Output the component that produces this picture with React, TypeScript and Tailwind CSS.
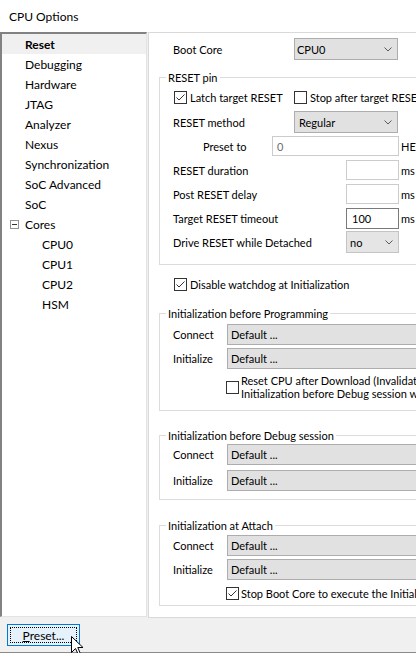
import React from "react";

const Chevron = () => (
  <svg width="8" height="5" viewBox="0 0 8 5" className="shrink-0">
    <path d="M0.5 0.5 L4 4 L7.5 0.5" fill="none" stroke="#5a5a5a" strokeWidth="1" />
  </svg>
);

const Check = ({ checked }: { checked?: boolean }) => (
  <div className="w-[13px] h-[13px] border border-[#333333] bg-white shrink-0 flex items-center justify-center">
    {checked && (
      <svg width="11" height="11" viewBox="0 0 11 11">
        <path d="M1.5 5.5 L4 8 L9.5 2.5" fill="none" stroke="#333333" strokeWidth="1" />
      </svg>
    )}
  </div>
);

const Group = ({
  title,
  className,
  children,
}: {
  title: string;
  className: string;
  children: React.ReactNode;
}) => (
  <fieldset className={"border border-[#dcdcdc] w-[290px] " + className}>
    <legend className="ml-[6px] px-[2px] leading-[15px]">{title}</legend>
    {children}
  </fieldset>
);

const WideSelect = () => (
  <div className="w-[230px] h-[21px] border border-[#adadad] bg-[#e1e1e1] flex items-center pl-[3px]">
    Default ...
  </div>
);

const treeItems = [
  "Debugging",
  "Hardware",
  "JTAG",
  "Analyzer",
  "Nexus",
  "Synchronization",
  "SoC Advanced",
  "SoC",
];

export default function App() {
  return (
    <div className="w-[416px] h-[653px] overflow-hidden relative bg-[#f0f0f0] text-black text-[12px] leading-[15px] font-['Lato',sans-serif]">
      {/* Title */}
      <div className="h-[32px] bg-white flex items-center pl-[9px]">CPU Options</div>

      {/* Body */}
      <div className="flex h-[586px]">
        {/* Tree */}
        <div className="w-[147px] h-[585px] shrink-0 bg-white border-l-2 border-t-2 border-l-[#828282] border-t-[#828282] border-r border-b border-r-[#e3e3e3] border-b-[#e3e3e3]">
          <div className="h-[20px] flex items-center pl-[23px] bg-[#f0f0f0] font-bold">Reset</div>
          {treeItems.map((t) => (
            <div key={t} className="h-[20px] flex items-center pl-[23px]">
              {t}
            </div>
          ))}
          <div className="h-[20px] flex items-center pl-[8px]">
            <div className="w-[9px] h-[9px] border border-[#919191] flex items-center justify-center shrink-0">
              <div className="w-[5px] h-[1px] bg-[#333333]" />
            </div>
            <span className="ml-[6px]">Cores</span>
          </div>
          {["CPU0", "CPU1", "CPU2", "HSM"].map((t) => (
            <div key={t} className="h-[20px] flex items-center pl-[40px]">
              {t}
            </div>
          ))}
        </div>

        {/* Right panel */}
        <div className="ml-[1px] w-[300px] shrink-0 h-[586px] bg-white border-l border-t border-b border-[#d9d9d9] pl-[10px] pt-[5px] flex flex-col whitespace-nowrap text-[11px]">
          {/* Boot core */}
          <div className="h-[22px] flex items-center pl-[14px]">
            <div className="w-[121px] shrink-0">Boot Core</div>
            <div className="w-[104px] h-[22px] border border-[#adadad] bg-[#e1e1e1] flex items-center justify-between pl-[2px] pr-[5px]">
              <span>CPU0</span>
              <Chevron />
            </div>
          </div>

          {/* RESET pin */}
          <Group title="RESET pin" className="mt-[10px] pb-[10px]">
            <div className="h-[24px] flex items-center pl-[14px]">
              <div className="w-[120px] shrink-0 flex items-center gap-[3px]">
                <Check checked />
                <span>Latch target RESET</span>
              </div>
              <div className="flex items-center gap-[3px]">
                <Check />
                <span>Stop after target RESET</span>
              </div>
            </div>
            <div className="mt-[1px] h-[24px] flex items-center pl-[13px]">
              <div className="w-[121px] shrink-0">RESET method</div>
              <div className="w-[104px] h-[22px] border border-[#adadad] bg-[#e1e1e1] flex items-center justify-between pl-[4px] pr-[5px]">
                <span>Regular</span>
                <Chevron />
              </div>
            </div>
            <div className="h-[24px] flex items-center pl-[13px]">
              <div className="w-[99px] shrink-0 pl-[30px]">Preset to</div>
              <div className="w-[127px] h-[20px] shrink-0 border border-[#cccccc] bg-white flex items-center pl-[4px] text-[#6d6d6d]">
                0
              </div>
              <span className="ml-[2px]">HEX</span>
            </div>
            <div className="h-[24px] flex items-center pl-[13px]">
              <div className="w-[173px] shrink-0">RESET duration</div>
              <div className="w-[53px] h-[20px] shrink-0 border border-[#cccccc] bg-white" />
              <span className="ml-[2px]">ms</span>
            </div>
            <div className="h-[24px] flex items-center pl-[13px]">
              <div className="w-[173px] shrink-0">Post RESET delay</div>
              <div className="w-[53px] h-[20px] shrink-0 border border-[#cccccc] bg-white" />
              <span className="ml-[2px]">ms</span>
            </div>
            <div className="h-[24px] flex items-center pl-[13px]">
              <div className="w-[173px] shrink-0">Target RESET timeout</div>
              <div className="w-[53px] h-[21px] shrink-0 border border-[#7a7a7a] bg-white flex items-center pl-[5px]">
                100
              </div>
              <span className="ml-[2px]">ms</span>
            </div>
            <div className="h-[24px] flex items-center pl-[13px]">
              <div className="w-[173px] shrink-0">Drive RESET while Detached</div>
              <div className="w-[53px] h-[22px] shrink-0 border border-[#c4c4c4] bg-[#e5e5e5] flex items-center justify-between pl-[3px] pr-[5px]">
                <span>no</span>
                <Chevron />
              </div>
            </div>
          </Group>

          {/* Watchdog */}
          <div className="mt-[7px] h-[24px] flex items-center pl-[15px] gap-[3px]">
            <Check checked />
            <span>Disable watchdog at Initialization</span>
          </div>

          {/* Init before programming */}
          <Group title="Initialization before Programming" className="mt-[10px] pb-[10px]">
            <div className="mt-[3px] flex items-center pl-[13px]">
              <div className="w-[54px] shrink-0">Connect</div>
              <WideSelect />
            </div>
            <div className="mt-[3px] flex items-center pl-[13px]">
              <div className="w-[54px] shrink-0">Initialize</div>
              <WideSelect />
            </div>
            <div className="mt-[5px] flex items-center pl-[66px] gap-[2px]">
              <Check />
              <div className="leading-[13px]">
                Reset CPU after Download (Invalidates
                <br />
                Initialization before Debug session when Attached)
              </div>
            </div>
          </Group>

          {/* Init before debug session */}
          <Group title="Initialization before Debug session" className="mt-[17px] pb-[8px]">
            <div className="mt-[1px] flex items-center pl-[13px]">
              <div className="w-[54px] shrink-0">Connect</div>
              <WideSelect />
            </div>
            <div className="mt-[5px] flex items-center pl-[13px]">
              <div className="w-[54px] shrink-0">Initialize</div>
              <WideSelect />
            </div>
          </Group>

          {/* Init at attach */}
          <Group title="Initialization at Attach" className="mt-[18px] pb-[4px]">
            <div className="mt-[2px] flex items-center pl-[13px]">
              <div className="w-[54px] shrink-0">Connect</div>
              <WideSelect />
            </div>
            <div className="mt-[3px] flex items-center pl-[13px]">
              <div className="w-[54px] shrink-0">Initialize</div>
              <WideSelect />
            </div>
            <div className="mt-[5px] h-[16px] flex items-center pl-[66px] gap-[2px]">
              <Check checked />
              <span>Stop Boot Core to execute the Initialization</span>
            </div>
          </Group>
        </div>
      </div>

      {/* Bottom bar */}
      <div className="h-[35px] border-b border-[#8a8a8a] pt-[6px] pl-[7px]">
        <div className="w-[73px] h-[22px] border border-[#0078d7] bg-[#e5f1fb] p-[2px] flex">
          <div className="flex-1 border border-dotted border-black flex items-center justify-center">
            <span>
              <span className="underline">P</span>reset...
            </span>
          </div>
        </div>
      </div>

      {/* Mouse cursor */}
      <svg
        className="absolute left-[71px] top-[636px]"
        width="13"
        height="20"
        viewBox="0 0 13 20"
      >
        <path
          d="M0.5 0.5 L0.5 16.5 L4.5 12.5 L7.5 19 L9.5 18 L6.8 11.5 L12 11.5 Z"
          fill="white"
          stroke="black"
          strokeWidth="1"
          strokeLinejoin="miter"
        />
      </svg>
    </div>
  );
}
